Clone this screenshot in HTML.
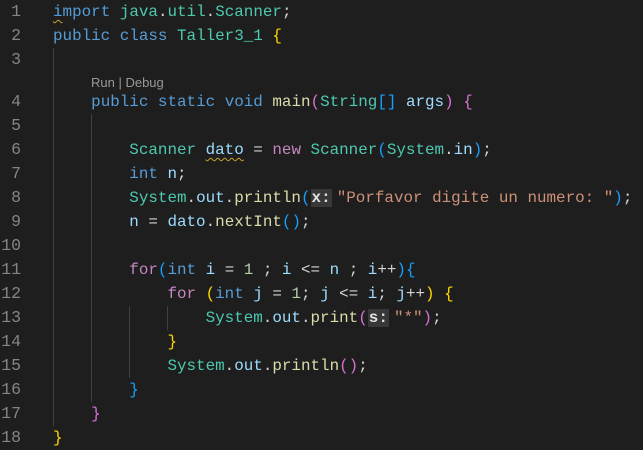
<!DOCTYPE html>
<html><head><meta charset="utf-8"><style>
body{margin:0;background:#1e1e1e;width:643px;height:448px;overflow:hidden;position:relative;font-family:"Liberation Mono",monospace;font-size:15.9px}
.ln{position:absolute;left:0;width:21px;text-align:right;color:#858585;height:24px;line-height:24px;font-size:16.5px}
.c{position:absolute;left:53px;white-space:pre;color:#d4d4d4;height:24px;line-height:24px}
.g{position:absolute;width:1px;background:#404040}
.k{color:#569cd6}.ct{color:#c586c0}.t{color:#4ec9b0}.v{color:#9cdcfe}.f{color:#dcdcaa}.s{color:#ce9178}.n{color:#b5cea8}
.b1{color:#ffd700}.b2{color:#da70d6}.b3{color:#179fff}
.h{background:#383838;color:#e0e0e0;padding:0 1px;margin-right:5px;font-size:16px;font-weight:bold}
.cl{position:absolute;left:91px;top:74px;font-family:"Liberation Sans",sans-serif;font-size:13px;color:#999;line-height:18px}
.sq{text-decoration:underline wavy #c9a227;text-decoration-thickness:1px;text-underline-offset:3px}
</style></head><body>
<div class="g" style="left:53px;top:48px;height:378px"></div>
<div class="g" style="left:91px;top:114px;height:288px"></div>
<div class="g" style="left:129px;top:306px;height:72px"></div>
<div class="g" style="left:167px;top:306px;height:24px"></div>

<div class="ln" style="top:0">1</div><div class="c" style="top:0"><span class="k sq">i</span><span class="k">mport</span> <span class="t">java</span>.<span class="t">util</span>.<span class="t">Scanner</span>;</div>
<div class="ln" style="top:24px">2</div><div class="c" style="top:24px"><span class="k">public</span> <span class="k">class</span> <span class="t">Taller3_1</span> <span class="b1">{</span></div>
<div class="ln" style="top:48px">3</div>
<div class="cl">Run | Debug</div>
<div class="ln" style="top:90px">4</div><div class="c" style="top:90px">    <span class="k">public</span> <span class="k">static</span> <span class="k">void</span> <span class="f">main</span><span class="b2">(</span><span class="t">String</span><span class="b3">[]</span> <span class="v">args</span><span class="b2">)</span> <span class="b2">{</span></div>
<div class="ln" style="top:114px">5</div>
<div class="ln" style="top:138px">6</div><div class="c" style="top:138px">        <span class="t">Scanner</span> <span class="v sq">dato</span> = <span class="ct">new</span> <span class="t">Scanner</span><span class="b3">(</span><span class="t">System</span>.<span class="v">in</span><span class="b3">)</span>;</div>
<div class="ln" style="top:162px">7</div><div class="c" style="top:162px">        <span class="k">int</span> <span class="v">n</span>;</div>
<div class="ln" style="top:186px">8</div><div class="c" style="top:186px">        <span class="t">System</span>.<span class="v">out</span>.<span class="f">println</span><span class="b3">(</span><span class="h">x:</span><span class="s">"Porfavor digite un numero: "</span><span class="b3">)</span>;</div>
<div class="ln" style="top:210px">9</div><div class="c" style="top:210px">        <span class="v">n</span> = <span class="v">dato</span>.<span class="f">nextInt</span><span class="b3">()</span>;</div>
<div class="ln" style="top:234px">10</div>
<div class="ln" style="top:258px">11</div><div class="c" style="top:258px">        <span class="ct">for</span><span class="b3">(</span><span class="k">int</span> <span class="v">i</span> = <span class="n">1</span> ; <span class="v">i</span> &lt;= <span class="v">n</span> ; <span class="v">i</span>++<span class="b3">){</span></div>
<div class="ln" style="top:282px">12</div><div class="c" style="top:282px">            <span class="ct">for</span> <span class="b1">(</span><span class="k">int</span> <span class="v">j</span> = <span class="n">1</span>; <span class="v">j</span> &lt;= <span class="v">i</span>; <span class="v">j</span>++<span class="b1">)</span> <span class="b1">{</span></div>
<div class="ln" style="top:306px">13</div><div class="c" style="top:306px">                <span class="t">System</span>.<span class="v">out</span>.<span class="f">print</span><span class="b2">(</span><span class="h">s:</span><span class="s">"*"</span><span class="b2">)</span>;</div>
<div class="ln" style="top:330px">14</div><div class="c" style="top:330px">            <span class="b1">}</span></div>
<div class="ln" style="top:354px">15</div><div class="c" style="top:354px">            <span class="t">System</span>.<span class="v">out</span>.<span class="f">println</span><span class="b2">()</span>;</div>
<div class="ln" style="top:378px">16</div><div class="c" style="top:378px">        <span class="b3">}</span></div>
<div class="ln" style="top:402px">17</div><div class="c" style="top:402px">    <span class="b2">}</span></div>
<div class="ln" style="top:426px">18</div><div class="c" style="top:426px"><span class="b1">}</span></div>
</body></html>
